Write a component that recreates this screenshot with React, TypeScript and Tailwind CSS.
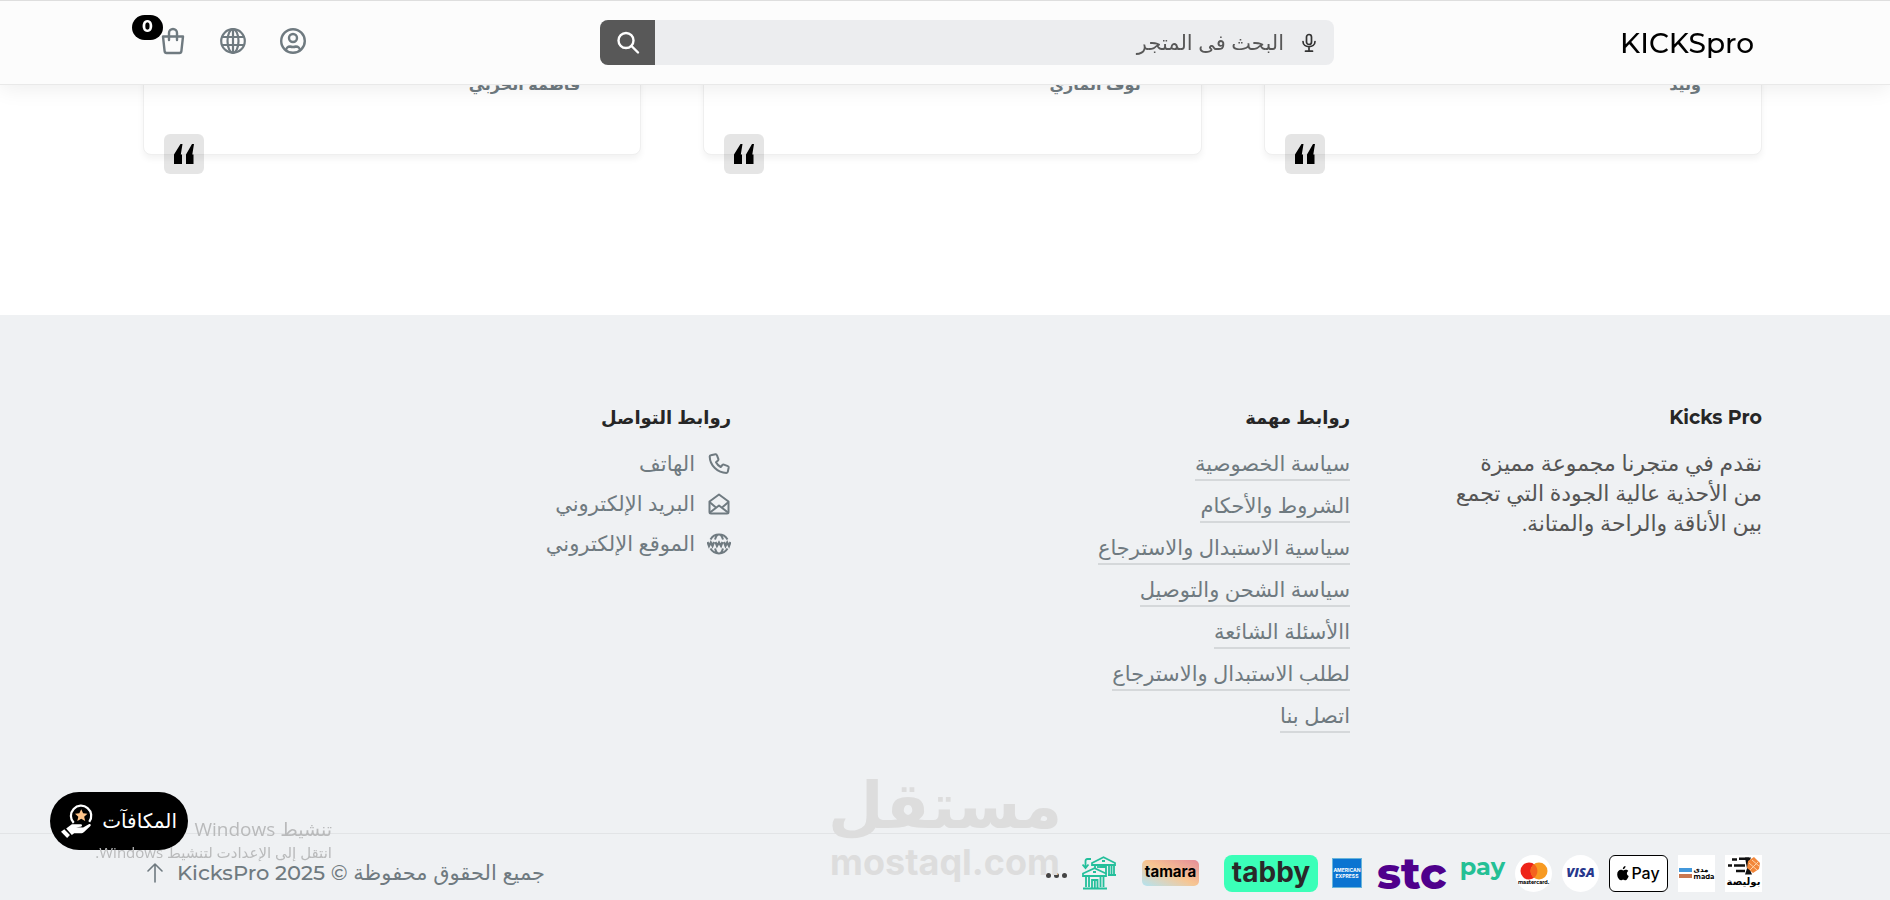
import React from 'react';

const BODY_FONT = "font-['Montserrat','Inter','DejaVu_Sans',sans-serif]";

interface Testimonial {
  id: number;
  name: string;
}

const testimonials: Testimonial[] = [
  { id: 1, name: 'وليد' },
  { id: 2, name: 'نوف الماري' },
  { id: 3, name: 'فاطمة الحربي' },
];

const importantLinks = [
  'سياسة الخصوصية',
  'الشروط والأحكام',
  'سياسية الاستبدال والاسترجاع',
  'سياسة الشحن والتوصيل',
  'االأسئلة الشائعة',
  'لطلب الاستبدال والاسترجاع',
  'اتصل بنا',
];

const UserIcon = () => (
  <svg viewBox="0 0 32 32" className="size-8" fill="none" stroke="currentColor" strokeWidth="2.400" aria-hidden="true">
    <circle cx="16" cy="16" r="11.800" />
    <circle cx="16" cy="13" r="4" />
    <path d="M9 25.500c0-2.500 2-4 4-4 1.500.5 4.500.5 6 0 2 0 4 1.500 4 4" />
  </svg>
);

const GlobeIcon = () => (
  <svg viewBox="0 0 32 32" className="size-8" fill="none" stroke="currentColor" strokeWidth="2.200" aria-hidden="true">
    <circle cx="16" cy="16" r="11.800" />
    <ellipse cx="16" cy="16" rx="5.500" ry="11.800" />
    <path d="M16 4v24M5 12h22M5 20h22" />
  </svg>
);

const BagIcon = () => (
  <svg viewBox="0 0 32 32" className="size-8" fill="none" stroke="currentColor" strokeWidth="2.400" strokeLinecap="round" strokeLinejoin="round" aria-hidden="true">
    <path d="M6 11.500h20l-1.600 14.700a2 2 0 0 1-2 1.800H9.600a2 2 0 0 1-2-1.800z" />
    <path d="M12 15V8a4 4 0 0 1 8 0v7" />
  </svg>
);

const SearchIcon = () => (
  <svg viewBox="0 0 24 24" className="size-6" fill="none" stroke="currentColor" strokeWidth="2.400" strokeLinecap="round" aria-hidden="true">
    <circle cx="10" cy="9.500" r="7.500" />
    <path d="M15.500 15l6.500 6.500" />
  </svg>
);

const MicIcon = () => (
  <svg viewBox="0 0 20 20" className="size-5" fill="none" stroke="currentColor" strokeWidth="1.700" strokeLinecap="round" aria-hidden="true">
    <rect x="7.500" y="1.500" width="5" height="10" rx="2.500" />
    <path d="M4 8.500c0 7 12 7 12 0M10 14v4M6.500 18.200h7" />
  </svg>
);

const PhoneIcon = () => (
  <svg viewBox="0 0 24 24" className="size-6" fill="none" stroke="currentColor" strokeWidth="2" strokeLinejoin="round" aria-hidden="true">
    <path d="M3.800 3.200l4.700-.9c.7-.1 1.200.2 1.400.8l1.500 4c.2.600 0 1.100-.4 1.500l-2 1.700c1 2 2.600 3.600 4.700 4.700l1.700-2c.4-.5.9-.6 1.500-.4l4 1.500c.6.2.9.7.8 1.400l-.9 4.200c-.1.700-.7 1.200-1.400 1.200C10.500 20.900 3 13.400 2.700 4.600c0-.7.4-1.300 1.100-1.400z" />
  </svg>
);

const MailIcon = () => (
  <svg viewBox="0 0 24 24" className="size-6" fill="none" stroke="currentColor" strokeWidth="2" strokeLinejoin="round" aria-hidden="true">
    <path d="M2.500 9.500L12 2.500l9.500 7V20a1.500 1.500 0 0 1-1.500 1.500H4A1.500 1.500 0 0 1 2.500 20z" />
    <path d="M2.500 10l7 6M21.500 10l-7 6M3 20.500l9-7 9 7" />
  </svg>
);

const WebIcon = () => (
  <svg viewBox="0 0 24 24" className="size-6" fill="none" stroke="currentColor" strokeWidth="2" aria-hidden="true">
    <path d="M3.500 7.500a9.800 9.800 0 0 1 17 0M3.500 16.500a9.800 9.800 0 0 0 17 0M8 7.500C9 4 10.500 2.500 12 2.500s3 1.500 4 5M8 16.500c1 3.500 2.500 5 4 5s3-1.500 4-5" />
    <path strokeWidth="2.200" d="M.5 10l1.500 4L3.800 10.500 5.500 14 7 10M8.500 10l1.500 4 2-3.500 2 3.500 1.500-4M17 10l1.500 4 1.700-3.500L22 14l1.500-4" />
  </svg>
);

const QuoteIcon = () => (
  <svg viewBox="0 0 20 20" className="size-5" fill="currentColor" aria-hidden="true">
    <path d="M6.500 0h2L6.800 10.500H8V20H0v-9.500zM18 0h2l-1.700 10.500h1.200V20H12v-9.500z" />
  </svg>
);

const ArrowUpIcon = () => (
  <svg viewBox="0 0 20 20" className="size-5" fill="none" stroke="currentColor" strokeWidth="1.600" strokeLinecap="round" strokeLinejoin="round" aria-hidden="true">
    <path d="M10 19V1.500M3 8l7-7 7 7" />
  </svg>
);

const RewardIcon = () => (
  <svg viewBox="0 0 34 36" className="h-9 w-8 shrink-0" fill="none" aria-hidden="true">
    <path d="M13.500 20A10.800 10.800 0 1 1 30 19" stroke="#fff" strokeWidth="2.400" />
    <path d="M21.500 5.500l2 4.300 4.600.5-3.500 3.100 1.100 4.600-4.200-2.400-4.200 2.400 1.100-4.600-3.500-3.100 4.600-.5z" fill="#ffc489" />
    <path d="M5.500 26l6-4.500h9.500c1.800 0 1.800 2.500 0 2.700l-5 .4 7.500.2 6-3.300c1.800-.8 3 .8 1.500 2.200l-6.500 6c-1 1-2 1.300-3.500 1.300h-7l-2.500 1.800z" fill="#fff" />
    <path d="M0 29.500l3.500-2.700 6 6L6.500 36z" fill="#fff" />
  </svg>
);

const BankTransfer = () => (
  <svg viewBox="0 0 34 34" className="size-[34px]" fill="none" stroke="#24bf9b" strokeWidth="1.800" aria-label="تحويل بنكي" role="img">
    <path d="M10 9V7L21.500 1.200 33 7v2zM29.500 9v10M32 9v10M26 19h8M13 9v4M16 9v3M27 9v10M18 12v-1h6v7" />
    <path d="M1 20v-2.500l11.500-5.300 11.500 5.300V20zM1 32.500h24M4 20v11M7 20v11M18.500 20v11M21.500 20v11M10 32v-8h5.500v8M12.800 24v8" />
    <path d="M9 3H5.500C4 3 3.500 4 3.500 5v6M.5 8.500l3 3.500 3-3.500" />
    <path d="M20 5h3M11 16h3" />
  </svg>
);

const Mastercard = () => (
  <div className="mr-[10px] flex size-[37px] flex-col items-center justify-center rounded-full bg-white">
    <svg viewBox="0 0 28 18" className="h-[18px] w-7" aria-hidden="true">
      <circle cx="9" cy="9" r="8.500" fill="#ee2419" />
      <circle cx="19" cy="9" r="8.500" fill="#f79a22" />
      <path d="M14 2.200a8.500 8.500 0 0 1 0 13.600 8.500 8.500 0 0 1 0-13.600z" fill="#f4631e" />
    </svg>
    <span dir="ltr" className="text-[5px] leading-[5px] font-bold text-black">mastercard.</span>
  </div>
);

const ApplePay = () => (
  <div dir="ltr" className="mr-[10px] flex h-[37px] w-[59px] items-center justify-center gap-[2px] rounded-md border border-black bg-white text-black">
    <svg viewBox="0 0 12 15" className="h-[15px] w-3" fill="currentColor" aria-hidden="true">
      <path d="M8.500 0c.1 1.700-1.100 3.200-2.700 3.300C5.600 1.700 7 .2 8.500 0zM11.300 5.100C9.300 6.300 9.500 9 11.700 10c-.6 1.800-1.900 4.300-3.300 4.300-.9 0-1.200-.5-2.200-.5s-1.400.5-2.200.5C2.200 14.400.2 11.200.2 8.300c0-3 2-4.500 3.700-4.500 1 0 1.800.6 2.400.6.600 0 1.500-.7 2.700-.7 1 0 1.800.500 2.300 1.400z" />
    </svg>
    <span className="font-['Inter',sans-serif] text-base leading-5 font-medium">Pay</span>
  </div>
);

const Mada = () => (
  <div dir="ltr" className="mr-[10px] flex size-[37px] items-center justify-center gap-[2px] bg-white">
    <div className="flex flex-col gap-[2px]">
      <span className="h-1 w-[13px] bg-[#4398db]" />
      <span className="h-1 w-[13px] bg-[#c9774f]" />
    </div>
    <div className="flex flex-col text-[7px] leading-[7px] font-bold text-black">
      <span>مدى</span>
      <span>mada</span>
    </div>
  </div>
);

const Bolisa = () => (
  <div className="flex size-[37px] flex-col items-center justify-center overflow-hidden bg-white">
    <svg viewBox="0 0 34 18" className="h-[18px] w-[34px]" aria-hidden="true">
      <path d="M5 2.500h5M12 1.800h10M1 8.500h4M7 8.500h11M9 14h9" stroke="#111" strokeWidth="2.500" />
      <path d="M18 .5h6l-3 7.500 4 9.500h-7l2-6z" fill="#111" />
      <path d="M21 4l6-4 6 6-1 6-6 4-6-5z" fill="#f2873a" />
      <path d="M22 6l8 7M25 3l7 6M31 5l-8 8" stroke="#ffd2a6" strokeWidth="1" />
    </svg>
    <span className="text-[10px] leading-[14px] font-bold text-black">بوليصة</span>
  </div>
);

const PaymentMethods = () => (
  <div className="flex h-[37px] items-center">
    <Bolisa />
    <Mada />
    <ApplePay />
    <div className="mr-[10px] flex size-[37px] items-center justify-center rounded-full bg-white font-['Open_Sans',sans-serif] text-[13px] font-extrabold text-[#27378c] italic">VISA</div>
    <Mastercard />
    <div dir="ltr" className="mr-[10px] flex w-[128px] items-center justify-between">
      <span className="text-[44px] leading-[38px] font-extrabold text-[#4f008c]">stc</span>
      <span className="pb-3 text-2xl leading-7 font-bold text-[#24c095]">pay</span>
    </div>
    <div dir="ltr" className="mr-[15px] flex size-[30px] flex-col justify-center border border-[#68b5da] bg-[#0b74d1] text-center font-['Inter',sans-serif] text-[5px] leading-[6px] font-bold text-white">
      <span>AMERICAN</span>
      <span>EXPRESS</span>
    </div>
    <div className="mr-[14px] flex h-[37px] w-[94px] items-center justify-center rounded-lg bg-[#3bffb8] pb-[2px] font-['Inter',sans-serif] text-[28px] font-bold text-[#292929]">tabby</div>
    <div className="mr-[25px] flex h-[26px] w-[57px] items-center justify-center rounded-[5px] bg-linear-to-tr from-[#afe3f2] via-[#f7c591] to-[#e58d99] pb-[2px] font-['Inter',sans-serif] text-[15px] font-bold text-black">tamara</div>
    <div className="mr-[26px]"><BankTransfer /></div>
    <span className="mr-[15px] flex gap-[3px] pt-1" role="img" aria-label="المزيد">
      <i className="size-[5px] rounded-full bg-[#444]" />
      <i className="size-[5px] rounded-full bg-[#444]" />
      <i className="size-[5px] rounded-full bg-[#444]" />
    </span>
  </div>
);

const Header = () => (
  <header className="fixed inset-x-0 top-0 z-20 h-[85px] border-y border-t-[#dedede] border-b-[#e9e9e9] bg-[#fcfcfc] pr-32 pl-[143px] shadow-[0_4px_20px_rgba(0,0,0,0.07)]">
    <div className="flex h-full items-center">
      <a href="#" dir="ltr" className="flex w-[428px] justify-end pr-2 text-[28px] leading-8 font-medium text-black">KICKSpro</a>
      <form className="flex h-[45px] flex-1 overflow-hidden rounded-lg bg-[#ecedef]" onSubmit={(e) => e.preventDefault()}>
        <button type="button" aria-label="بحث صوتي" className="flex w-[50px] items-center justify-center text-[#333]">
          <MicIcon />
        </button>
        <input type="search" aria-label="البحث" placeholder="البحث فى المتجر" className="min-w-0 flex-1 bg-transparent text-[21px] outline-none placeholder:text-[#585858]" />
        <button type="submit" aria-label="بحث" className="flex w-[55px] items-center justify-center bg-[#585858] text-white">
          <SearchIcon />
        </button>
      </form>
      <nav className="flex w-[457px] justify-end gap-7 pb-1 pl-[14px] text-[#6f7a80]">
        <button type="button" aria-label="حسابي"><UserIcon /></button>
        <button type="button" aria-label="اللغة"><GlobeIcon /></button>
        <button type="button" aria-label="السلة" className="relative">
          <BagIcon />
          <span className="absolute -top-[10px] right-[26px] flex h-[25px] w-[31px] items-center justify-center rounded-full bg-black text-base font-bold text-white">0</span>
        </button>
      </nav>
    </div>
  </header>
);

const Testimonials = () => (
  <section className="grid grid-cols-3 gap-[62px] pr-32 pb-40 pl-[143px]">
    {testimonials.map((item) => (
      <article key={item.id} className="relative h-[155px] rounded-lg border border-[#efefef] bg-white pt-[70px] pr-[60px] shadow-[0_4px_6px_rgba(0,0,0,0.05)]">
        <h3 className="text-base leading-7 font-bold text-[#6f7a80]">{item.name}</h3>
        <span className="absolute -bottom-5 left-5 flex size-10 items-center justify-center rounded-md bg-black/10 text-black">
          <QuoteIcon />
        </span>
      </article>
    ))}
  </section>
);

const Footer = () => (
  <footer className="bg-[#eff1f3]">
    <div className="flex h-[519px] border-b border-[#e2e4e6] pt-[88px] pr-32 pl-[143px] text-[21px] leading-[30px]">
      <div className="w-[412px]">
        <h2 className="mb-4 text-[19px] leading-[30px] font-bold text-[#262626]">Kicks Pro</h2>
        <p className="w-[360px] text-[22px] text-[#555]">
          نقدم في متجرنا مجموعة مميزة
          <br />
          من الأحذية عالية الجودة التي تجمع
          <br />
          بين الأناقة والراحة والمتانة.
        </p>
      </div>
      <div className="w-[619px]">
        <h2 className="mb-4 text-lg leading-[30px] font-bold text-[#262626]">روابط مهمة</h2>
        <ul className="flex flex-col items-start gap-[10px] text-[#6f7a80]">
          {importantLinks.map((link) => (
            <li key={link}>
              <a href="#" className="block h-8 border-b-2 border-[#d5d8da]">{link}</a>
            </li>
          ))}
        </ul>
      </div>
      <div>
        <h2 className="mb-4 text-lg leading-[30px] font-bold text-[#262626]">روابط التواصل</h2>
        <ul className="flex flex-col gap-[10px] text-[#6f7a80]">
          <li><a href="#" className="flex items-center gap-3"><PhoneIcon />الهاتف</a></li>
          <li><a href="#" className="flex items-center gap-3"><MailIcon />البريد الإلكتروني</a></li>
          <li><a href="#" className="flex items-center gap-3"><WebIcon />الموقع الإلكتروني</a></li>
        </ul>
      </div>
    </div>
    <div className="flex h-[66px] items-center justify-between pt-3 pr-32 pl-[145px]">
      <PaymentMethods />
      <div className="flex items-center gap-3 text-[#6f7a80]">
        <p className="text-[21px] leading-7 font-medium">جميع الحقوق محفوظة © 2025 KicksPro</p>
        <a href="#" aria-label="إلى الأعلى"><ArrowUpIcon /></a>
      </div>
    </div>
  </footer>
);

const App: React.FC = () => {
  return (
    <div dir="rtl" className={`relative h-screen overflow-hidden bg-white ${BODY_FONT}`}>
      <Header />
      <Testimonials />
      <Footer />

      {/* Site watermark */}
      <div className="pointer-events-none absolute bottom-[18px] left-[830px] flex w-[230px] flex-col items-center text-[#ddd]">
        <span className="font-['DejaVu_Sans',sans-serif] text-[64px] leading-[72px] font-bold">مستقل</span>
        <span className="font-['Inter',sans-serif] text-4xl leading-10 font-bold">mostaql.com</span>
      </div>

      <button type="button" className="fixed bottom-[50px] left-[50px] flex h-[58px] w-[138px] items-center justify-between rounded-full bg-black px-[11px] text-xl font-medium text-white">
        المكافآت
        <RewardIcon />
      </button>

      {/* System activation notice */}
      <div className="pointer-events-none fixed bottom-[38px] left-[96px] w-[236px] whitespace-nowrap text-[#b9babb]">
        <p className="font-['Open_Sans','DejaVu_Sans',sans-serif] text-[19px] leading-[26px]">تنشيط Windows</p>
        <p className="font-['Open_Sans','DejaVu_Sans',sans-serif] text-[15px] leading-5">انتقل إلى الإعدادت لتنشيط Windows.</p>
      </div>
    </div>
  );
};

export default App;
